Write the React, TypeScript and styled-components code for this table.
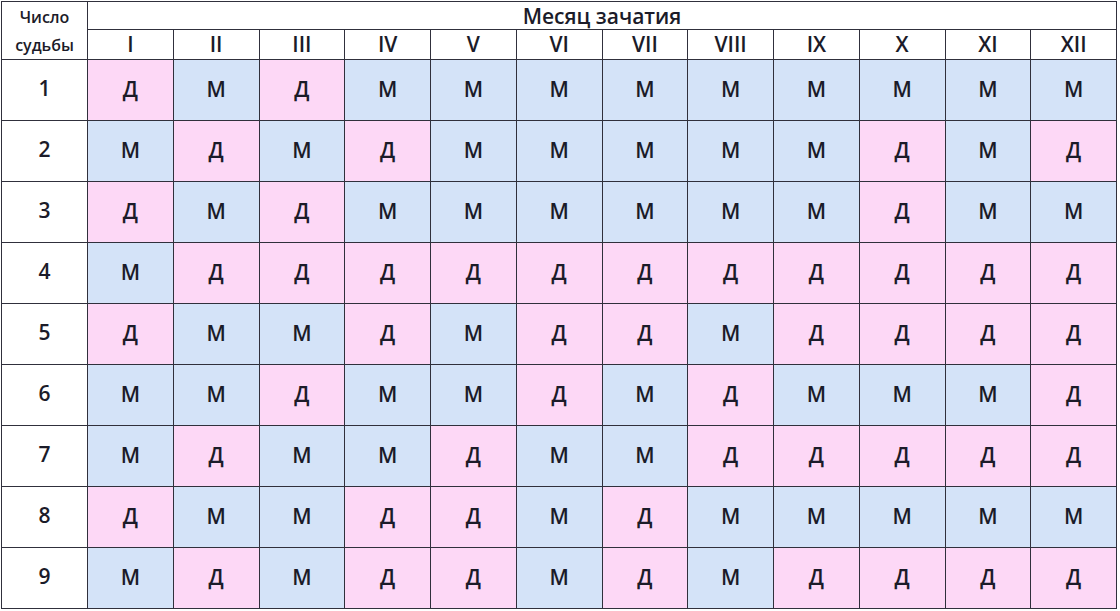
import styled, { createGlobalStyle } from "styled-components";

const GlobalStyle = createGlobalStyle`
  html, body {
    margin: 0;
    padding: 0;
    background: #ffffff;
  }
  body {
    font-family: "Open Sans", "Liberation Sans", sans-serif;
    color: #1b1b29;
  }
  * {
    box-sizing: border-box;
  }
`;

const Wrapper = styled.div`
  padding: 1px 0 0 1px;
`;

const Table = styled.table`
  width: 1116px;
  border-collapse: collapse;
  table-layout: fixed;
`;

const Corner = styled.th`
  width: 86px;
  border: 1.5px solid #30303c;
  font-size: 16px;
  font-weight: 600;
  line-height: 28px;
  text-align: center;
  padding: 0;
`;

const Title = styled.th`
  height: 28px;
  border: 1.5px solid #30303c;
  font-size: 21px;
  font-weight: 600;
  line-height: 22px;
  padding: 0;
`;

const Month = styled.th`
  height: 30px;
  border: 1.5px solid #30303c;
  font-size: 21px;
  font-weight: 600;
  padding: 0 0 2px;
  line-height: 26px;
`;

const Num = styled.th`
  height: 61px;
  border: 1.5px solid #30303c;
  font-size: 21px;
  font-weight: 600;
  padding: 0 0 5px;
  background: #ffffff;
`;

const Cell = styled.td<{ $girl: boolean }>`
  height: 61px;
  border: 1.5px solid #30303c;
  background: ${(p) => (p.$girl ? "#fdd8f6" : "#d4e3f8")};
  font-size: 21px;
  font-weight: 600;
  text-align: center;
  padding: 0 0 3px;
`;

const months = ["I", "II", "III", "IV", "V", "VI", "VII", "VIII", "IX", "X", "XI", "XII"];

const rows = [
  "ДМДМММММММММ",
  "МДМДМММММДМД",
  "ДМДММММММДММ",
  "МДДДДДДДДДДД",
  "ДММДМДДМДДДД",
  "ММДММДМДМММД",
  "МДММДММДДДДД",
  "ДММДДМДММММM",
  "МДМДДМДМДДДД",
];

export default function App() {
  return (
    <Wrapper>
      <GlobalStyle />
      <Table>
        <thead>
          <tr>
            <Corner rowSpan={2}>
              Число
              <br />
              судьбы
            </Corner>
            <Title colSpan={12}>Месяц зачатия</Title>
          </tr>
          <tr>
            {months.map((m) => (
              <Month key={m}>{m}</Month>
            ))}
          </tr>
        </thead>
        <tbody>
          {rows.map((row, i) => (
            <tr key={i}>
              <Num>{i + 1}</Num>
              {Array.from(row).map((c, j) => (
                <Cell key={j} $girl={c === "Д"}>
                  {c === "M" ? "М" : c}
                </Cell>
              ))}
            </tr>
          ))}
        </tbody>
      </Table>
    </Wrapper>
  );
}
